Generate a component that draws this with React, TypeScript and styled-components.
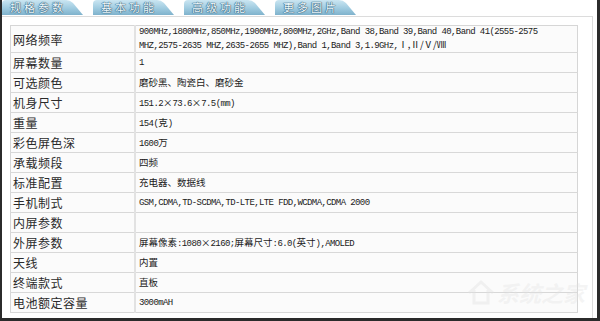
import { FC, Fragment } from "react";
import styled, { createGlobalStyle } from "styled-components";

const GlobalStyle = createGlobalStyle`
  html, body {
    margin: 0;
    padding: 0;
    background: #ffffff;
  }
`;

const Frame = styled.div`
  position: relative;
  width: 600px;
  height: 321px;
  box-sizing: border-box;
  border-left: 2px solid #2b2b2b;
  border-right: 3px solid #2b2b2b;
  border-bottom: 3px solid #2b2b2b;
  background: #ffffff;
  overflow: hidden;
  display: flex;
  flex-direction: column;
`;

const TabBar = styled.nav`
  display: flex;
  gap: 10px;
  height: 15px;
`;

const Tab = styled.div`
  width: 81px;
  height: 15px;
  box-sizing: border-box;
  padding-left: 8px;
  clip-path: path("M0 15 L0 4 Q0 0 4 0 L64 0 Q68 0 71 3 L81 15 Z");
  background: linear-gradient(180deg, #cbe6f2 0%, #9fcbe0 55%, #7fb2cc 100%);
  font-family: "Noto Sans CJK SC", sans-serif;
  font-size: 11px;
  line-height: 15px;
  letter-spacing: 3px;
  color: #eef8fc;
  text-shadow: 0 0 1px #2c5a76, 0 0 1px #2c5a76, 0 0 1px #2c5a76;
`;

const Panel = styled.section`
  flex: 1;
  margin-top: 1px;
  margin-right: 4px;
  border-top: 1px solid #dcdcdc;
  border-right: 1px solid #dcdcdc;
  padding: 8px 0 0 8px;
`;

const SpecTable = styled.table`
  width: 568px;
  border-collapse: collapse;
  background: #fbfbfb;
  border: 1px solid #d6d6d6;
`;

const Row = styled.tr<{ $tall?: boolean }>`
  height: ${(p) => (p.$tall ? 25 : 20)}px;
  border-bottom: 1px solid #d8d8d8;
`;

const Label = styled.td`
  width: 121px;
  padding: 0 0 0 2px;
  border-right: 2px solid #e2e2e2;
  font-family: "Noto Sans CJK SC", sans-serif;
  font-size: 12px;
  letter-spacing: 0.5px;
  color: #2a2a2a;
  vertical-align: middle;
  white-space: nowrap;
`;

const Value = styled.td`
  padding: 0 0 0 3px;
  font-family: "Liberation Mono", monospace;
  font-size: 9px;
  letter-spacing: -0.6px;
  line-height: 12px;
  color: #1a1a1a;
  vertical-align: middle;
  white-space: pre-line;
`;

const Han = styled.span`
  font-family: "Noto Sans CJK SC", sans-serif;
  font-size: 9.5px;
  letter-spacing: 0;
  line-height: 12px;
`;

const Watermark = styled.div`
  position: absolute;
  right: 12px;
  bottom: 10px;
  display: flex;
  align-items: center;
  gap: 2px;
  font-family: "Noto Sans CJK SC", sans-serif;
  font-size: 22px;
  font-style: italic;
  font-weight: 700;
  color: rgba(225, 225, 225, 0.35);
  pointer-events: none;
`;

const tabs = ["规格参数", "基本功能", "高级功能", "更多图片"];

const specs: [string, string][] = [
  [
    "网络频率",
    "900MHz,1800MHz,850MHz,1900MHz,800MHz,2GHz,Band 38,Band 39,Band 40,Band 41(2555-2575\nMHZ,2575-2635 MHZ,2635-2655 MHZ),Band 1,Band 3,1.9GHz,Ⅰ,Ⅱ/Ⅴ/Ⅷ",
  ],
  ["屏幕数量", "1"],
  ["可选颜色", "磨砂黑、陶瓷白、磨砂金"],
  ["机身尺寸", "151.2×73.6×7.5(mm)"],
  ["重量", "154(克)"],
  ["彩色屏色深", "1600万"],
  ["承载频段", "四频"],
  ["标准配置", "充电器、数据线"],
  ["手机制式", "GSM,CDMA,TD-SCDMA,TD-LTE,LTE FDD,WCDMA,CDMA 2000"],
  ["内屏参数", ""],
  ["外屏参数", "屏幕像素:1080×2160;屏幕尺寸:6.0(英寸),AMOLED"],
  ["天线", "内置"],
  ["终端款式", "直板"],
  ["电池额定容量", "3000mAH"],
];

// wide glyphs (and the roman numeral list) get the CJK face, the rest stays half-width mono
const MixedText: FC<{ text: string }> = ({ text }) => {
  const parts = text.split(/((?:[\u2160-\u216f][,/]?)+|[\u3000-\u9fff\uff00-\uffef×]+)/);
  return (
    <>
      {parts.map((part, i) =>
        i % 2 === 1 ? <Han key={i}>{part}</Han> : <Fragment key={i}>{part}</Fragment>
      )}
    </>
  );
};

const App: FC = () => {
  return (
    <>
      <GlobalStyle />
      <Frame>
        <TabBar>
          {tabs.map((t) => (
            <Tab key={t}>{t}</Tab>
          ))}
        </TabBar>
        <Panel>
          <SpecTable>
            <tbody>
              {specs.map(([label, value], i) => (
                <Row key={label} $tall={i === 0}>
                  <Label>{label}</Label>
                  <Value>
                    <MixedText text={value} />
                  </Value>
                </Row>
              ))}
            </tbody>
          </SpecTable>
        </Panel>
        <Watermark>
          <svg width="28" height="26" viewBox="0 0 28 26">
            <path d="M2 14 L14 3 L26 14 M7 11 V24 H21 V11" fill="none" stroke="rgba(225,225,225,0.4)" strokeWidth="3" />
          </svg>
          系统之家
        </Watermark>
      </Frame>
    </>
  );
};

export default App;
